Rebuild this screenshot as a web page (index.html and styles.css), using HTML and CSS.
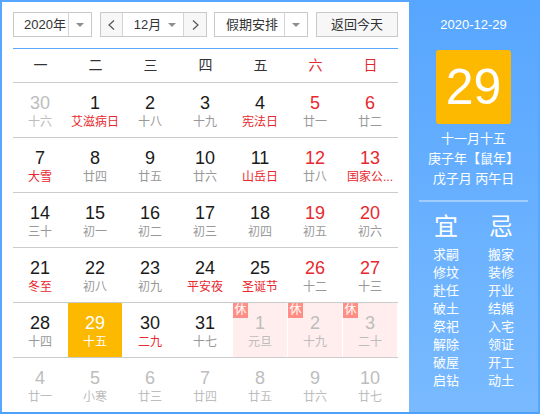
FILE: index.html
```html
<!DOCTYPE html>
<html lang="zh">
<head>
<meta charset="utf-8">
<title>万年历</title>
<link rel="stylesheet" href="styles.css">
</head>
<body>
<div class="app">
  <div class="main">
    <div class="toolbar">
      <div class="select year"><span class="sel-text">2020年</span><span class="sel-arrow"></span></div>
      <div class="month-group">
        <span class="nav prev"><svg width="7" height="10" viewBox="0 0 7 10"><polyline points="6,0.5 1,5 6,9.5" fill="none" stroke="#555" stroke-width="1.2"/></svg></span>
        <div class="month"><span class="sel-text">12月</span><span class="sel-arrow plain"></span></div>
        <span class="nav next"><svg width="7" height="10" viewBox="0 0 7 10"><polyline points="1,0.5 6,5 1,9.5" fill="none" stroke="#555" stroke-width="1.2"/></svg></span>
      </div>
      <div class="select holiday"><span class="sel-text">假期安排</span><span class="sel-arrow"></span></div>
      <div class="today-btn">返回今天</div>
    </div>

    <div class="weekdays">
      <span>一</span><span>二</span><span>三</span><span>四</span><span>五</span><span class="red">六</span><span class="red">日</span>
    </div>

    <div class="weeks">
      <div class="week">
        <div class="day other"><div class="num">30</div><div class="lunar">十六</div></div>
        <div class="day"><div class="num">1</div><div class="lunar fest">艾滋病日</div></div>
        <div class="day"><div class="num">2</div><div class="lunar">十八</div></div>
        <div class="day"><div class="num">3</div><div class="lunar">十九</div></div>
        <div class="day"><div class="num">4</div><div class="lunar fest">宪法日</div></div>
        <div class="day weekend"><div class="num">5</div><div class="lunar">廿一</div></div>
        <div class="day weekend"><div class="num">6</div><div class="lunar">廿二</div></div>
      </div>
      <div class="week">
        <div class="day"><div class="num">7</div><div class="lunar fest">大雪</div></div>
        <div class="day"><div class="num">8</div><div class="lunar">廿四</div></div>
        <div class="day"><div class="num">9</div><div class="lunar">廿五</div></div>
        <div class="day"><div class="num">10</div><div class="lunar">廿六</div></div>
        <div class="day"><div class="num">11</div><div class="lunar fest">山岳日</div></div>
        <div class="day weekend"><div class="num">12</div><div class="lunar">廿八</div></div>
        <div class="day weekend"><div class="num">13</div><div class="lunar fest">国家公...</div></div>
      </div>
      <div class="week">
        <div class="day"><div class="num">14</div><div class="lunar">三十</div></div>
        <div class="day"><div class="num">15</div><div class="lunar">初一</div></div>
        <div class="day"><div class="num">16</div><div class="lunar">初二</div></div>
        <div class="day"><div class="num">17</div><div class="lunar">初三</div></div>
        <div class="day"><div class="num">18</div><div class="lunar">初四</div></div>
        <div class="day weekend"><div class="num">19</div><div class="lunar">初五</div></div>
        <div class="day weekend"><div class="num">20</div><div class="lunar">初六</div></div>
      </div>
      <div class="week">
        <div class="day"><div class="num">21</div><div class="lunar fest">冬至</div></div>
        <div class="day"><div class="num">22</div><div class="lunar">初八</div></div>
        <div class="day"><div class="num">23</div><div class="lunar">初九</div></div>
        <div class="day"><div class="num">24</div><div class="lunar fest">平安夜</div></div>
        <div class="day"><div class="num">25</div><div class="lunar fest">圣诞节</div></div>
        <div class="day weekend"><div class="num">26</div><div class="lunar">十二</div></div>
        <div class="day weekend"><div class="num">27</div><div class="lunar">十三</div></div>
      </div>
      <div class="week">
        <div class="day"><div class="num">28</div><div class="lunar">十四</div></div>
        <div class="day today"><div class="num">29</div><div class="lunar">十五</div></div>
        <div class="day"><div class="num">30</div><div class="lunar fest">二九</div></div>
        <div class="day"><div class="num">31</div><div class="lunar">十七</div></div>
        <div class="day other rest"><span class="badge">休</span><div class="num">1</div><div class="lunar">元旦</div></div>
        <div class="day other rest"><span class="badge">休</span><div class="num">2</div><div class="lunar">十九</div></div>
        <div class="day other rest"><span class="badge">休</span><div class="num">3</div><div class="lunar">二十</div></div>
      </div>
      <div class="week">
        <div class="day other"><div class="num">4</div><div class="lunar">廿一</div></div>
        <div class="day other"><div class="num">5</div><div class="lunar">小寒</div></div>
        <div class="day other"><div class="num">6</div><div class="lunar">廿三</div></div>
        <div class="day other"><div class="num">7</div><div class="lunar">廿四</div></div>
        <div class="day other"><div class="num">8</div><div class="lunar">廿五</div></div>
        <div class="day other"><div class="num">9</div><div class="lunar">廿六</div></div>
        <div class="day other"><div class="num">10</div><div class="lunar">廿七</div></div>
      </div>
    </div>
  </div>

  <div class="panel">
    <div class="p-date">2020-12-29</div>
    <div class="p-box">29</div>
    <div class="p-lunar">
      <div>十一月十五</div>
      <div>庚子年【鼠年】</div>
      <div>戊子月 丙午日</div>
    </div>
    <div class="p-line"></div>
    <div class="yiji">
      <div class="col">
        <div class="yj-head">宜</div>
        <div class="items">
          <div>求嗣</div><div>修坟</div><div>赴任</div><div>破土</div><div>祭祀</div><div>解除</div><div>破屋</div><div>启钻</div>
        </div>
      </div>
      <div class="col">
        <div class="yj-head">忌</div>
        <div class="items">
          <div>搬家</div><div>装修</div><div>开业</div><div>结婚</div><div>入宅</div><div>领证</div><div>开工</div><div>动土</div>
        </div>
      </div>
    </div>
  </div>
</div>
</body>
</html>
```

FILE: styles.css
```css
* { box-sizing: border-box; }

body {
  margin: 0;
  font-family: "Liberation Sans", "Noto Sans CJK SC", sans-serif;
  background: #fff;
}

.app {
  width: 540px;
  height: 414px;
  border: 2px solid #57a6ff;
  border-bottom-color: #4ea1fb;
  display: flex;
}

.main {
  width: 407px;
  padding: 10px 11px 0;
  background: #fff;
}

/* toolbar */
.toolbar {
  display: flex;
  height: 25px;
  font-size: 13px;
  color: #333;
}

.select {
  display: flex;
  height: 25px;
  border: 1px solid #c9c9c9;
  background: #fff;
}

.year { width: 79px; margin-right: 8px; }
.holiday { width: 94px; margin-right: 8px; }

.sel-text {
  flex: 1;
  padding-left: 10px;
  line-height: 23px;
  white-space: nowrap;
}

.holiday .sel-text { padding-left: 11px; }

.sel-arrow {
  width: 23px;
  border-left: 1px solid #d4d4d4;
  display: flex;
  align-items: center;
  justify-content: center;
}

.sel-arrow::after {
  content: "";
  border-left: 4px solid transparent;
  border-right: 4px solid transparent;
  border-top: 4px solid #8f8f8f;
}

.sel-arrow.plain { border-left: none; width: 22px; }

.month-group {
  width: 107px;
  margin-right: 7px;
  height: 25px;
  display: flex;
  border: 1px solid #c9c9c9;
  background: #fff;
}

.nav {
  width: 22px;
  background: #f7f7f7;
  display: flex;
  align-items: center;
  justify-content: center;
}

.prev { border-right: 1px solid #d4d4d4; }
.next { border-left: 1px solid #d4d4d4; width: 23px; }

.month {
  flex: 1;
  display: flex;
}

.month .sel-text { padding-left: 11px; }

.today-btn {
  width: 82px;
  height: 25px;
  border: 1px solid #c9c9c9;
  background: #f7f7f7;
  text-align: center;
  line-height: 23px;
}

/* weekday header */
.weekdays {
  margin-top: 11px;
  height: 35px;
  border-top: 1px solid #5aa7ff;
  border-bottom: 1px solid #cbcbcb;
  display: grid;
  grid-template-columns: repeat(7, 55px);
  font-size: 14px;
  line-height: 33px;
  text-align: center;
  color: #333;
}

.red { color: #e8282e; }

/* days */
.week {
  display: flex;
  height: 55px;
  border-bottom: 1px solid #cbcbcb;
}

.week:last-child {
  height: 54px;
  border-bottom: none;
}

.day {
  width: 55px;
  position: relative;
  padding-top: 10px;
  border-right: 1px solid transparent;
  background-clip: padding-box;
  text-align: center;
  color: #1a1a1a;
}

.num {
  font-size: 18px;
  line-height: 20px;
}

.lunar {
  margin-top: 1px;
  font-size: 12px;
  line-height: 16px;
  color: #999;
  white-space: nowrap;
}

.lunar.fest { color: #e8282e; }

.weekend .num { color: #e8282e; }

.other .num,
.other .lunar { color: #bdbdbd; }

.today { background-color: #fdb800; }
.today .num,
.today .lunar { color: #fff; }

.rest { background-color: #ffeeed; }

.badge {
  position: absolute;
  left: 0;
  top: 0;
  width: 15px;
  height: 15px;
  background: #ff8f86;
  color: #fff;
  font-size: 12px;
  line-height: 15px;
  text-align: center;
}

/* right panel */
.panel {
  flex: 1;
  background: linear-gradient(#57a6ff, #79baff);
  color: #fff;
  text-align: center;
  padding-top: 14px;
}

.p-date {
  font-size: 13px;
  line-height: 18px;
}

.p-box {
  width: 75px;
  height: 74px;
  margin: 16px auto 0;
  background: #fdb800;
  border-radius: 3px;
  font-size: 50px;
  line-height: 74px;
}

.p-lunar {
  margin-top: 5px;
  font-size: 13px;
  line-height: 20px;
}

.p-line {
  height: 2px;
  margin: 11px 10px 0;
  background: rgba(255, 255, 255, 0.38);
}

.yiji {
  display: grid;
  grid-template-columns: 55px 55px;
  justify-content: center;
  margin-top: 10px;
}

.yj-head {
  font-size: 24px;
  line-height: 30px;
}

.items {
  margin-top: 4px;
  font-size: 13px;
  line-height: 18px;
}
```
